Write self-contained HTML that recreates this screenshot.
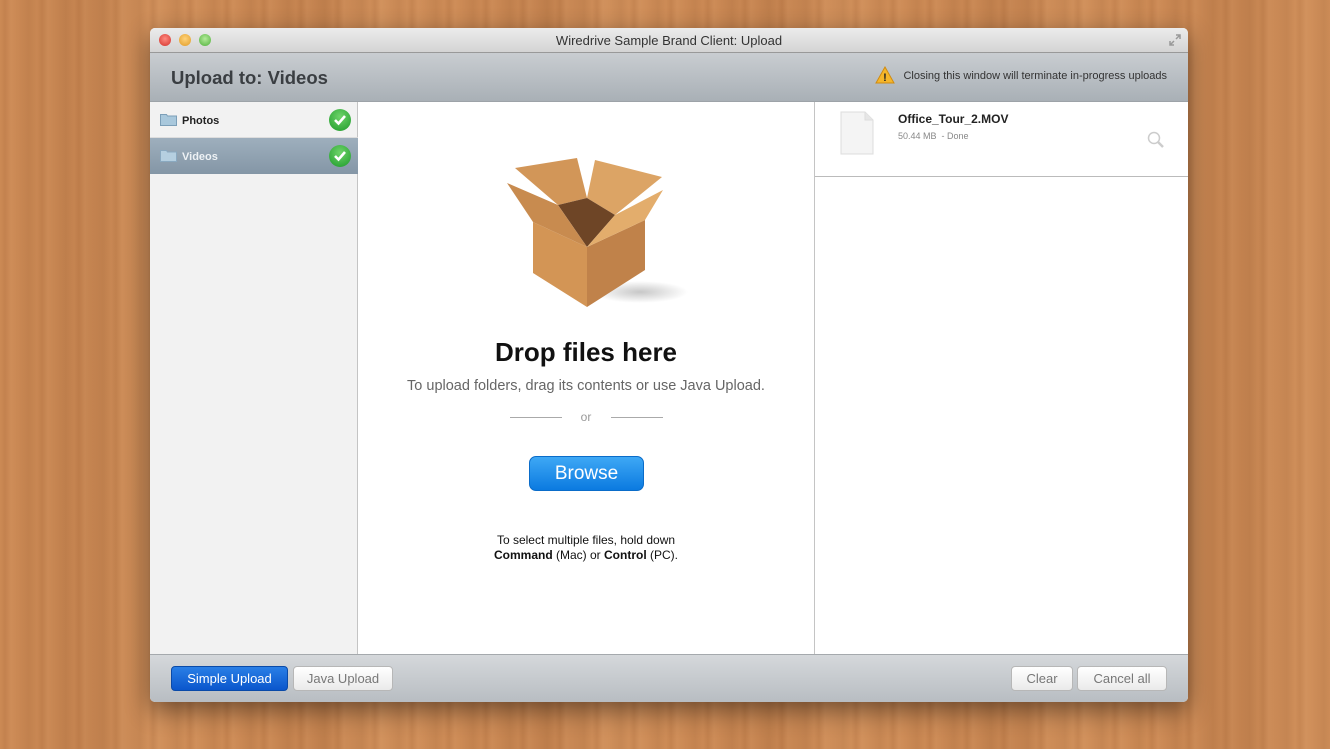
<!DOCTYPE html>
<html><head><meta charset="utf-8"><style>
*{margin:0;padding:0;box-sizing:border-box}
body{width:1330px;height:749px;overflow:hidden;position:relative;font-family:"Liberation Sans",sans-serif;
background:
repeating-linear-gradient(90deg,rgba(120,60,20,0) 0px,rgba(120,60,20,.10) 5px,rgba(255,200,150,.06) 11px,rgba(120,60,20,0) 17px,rgba(100,50,15,.08) 29px,rgba(120,60,20,0) 37px),
repeating-linear-gradient(90deg,rgba(90,40,10,0) 0,rgba(90,40,10,.07) 90px,rgba(255,210,160,.07) 150px,rgba(90,40,10,0) 230px),
#cc8a55;}
.win{position:absolute;left:150px;top:28px;width:1038px;height:674px;background:#fff;border-radius:5px;overflow:hidden;box-shadow:0 8px 25px rgba(0,0,0,.45);}
.title{position:absolute;left:0;top:0;width:100%;height:25px;background:linear-gradient(#ececec,#d4d4d4);border-bottom:1px solid #999;text-align:center;font-size:13px;color:#333;line-height:25px}
.dot{position:absolute;top:6px;width:12px;height:12px;border-radius:50%}
.hdr{position:absolute;left:0;top:25px;width:100%;height:49px;background:linear-gradient(#c9cdd1,#a9b0b6);border-bottom:1px solid #9da3a8}
.hdr h1{position:absolute;left:21px;top:14px;font-size:18.5px;font-weight:bold;color:#3a3e42}
.warn{position:absolute;right:21px;top:17px;font-size:11px;color:#333}
.side{position:absolute;left:0;top:74px;width:208px;height:552px;background:#f2f2f2;border-right:1px solid #c4c4c4}
.row{position:absolute;left:0;width:208px;height:36px;font-size:11px;font-weight:bold;line-height:38px;padding-left:32px}
.fold{position:absolute;left:10px;top:11px;width:17px;height:13px}
.chk{position:absolute;right:7px;top:7px;width:22px;height:22px;border-radius:50%;background:radial-gradient(circle at 50% 35%,#6fd46a,#1d9a2a);}
.chk svg{position:absolute;left:4px;top:5px}
.mid{position:absolute;left:208px;top:74px;width:456px;height:552px;text-align:center}
.right{position:absolute;left:664px;top:74px;width:374px;height:552px;border-left:1px solid #c4c4c4}
.foot{position:absolute;left:0;top:626px;width:100%;height:48px;background:linear-gradient(#d5d8db,#b8bdc2);border-top:1px solid #a5a9ad}
.btn{position:absolute;top:11px;height:25px;border-radius:4px;font-size:13px;line-height:23px;text-align:center;background:linear-gradient(#fff,#eaeaea);border:1px solid #b7b7b7;color:#777}
</style></head><body>
<div class="win">
 <div class="title">Wiredrive Sample Brand Client: Upload
  <div class="dot" style="left:9px;background:radial-gradient(circle at 50% 40%,#ff8a80,#d2302a)"></div>
  <div class="dot" style="left:29px;background:radial-gradient(circle at 50% 40%,#ffd37a,#e09a25)"></div>
  <div class="dot" style="left:49px;background:radial-gradient(circle at 50% 40%,#b4ec9a,#4eae3a)"></div>
  <svg style="position:absolute;right:6px;top:5px" width="14" height="14"><path d="M8 2h4v4M12 2L8 6M2 8v4h4M2 12l4-4" stroke="#999" stroke-width="1.5" fill="none"/></svg>
 </div>
 <div class="hdr"><h1>Upload to: Videos</h1>
  <div class="warn"><svg style="position:absolute;left:-28px;top:-4px" width="20" height="18"><path d="M10 1L19 17H1Z" fill="#f5b62b" stroke="#d08b10"/><text x="10" y="15" font-size="11" font-weight="bold" text-anchor="middle" fill="#222" font-family="Liberation Sans">!</text></svg>Closing this window will terminate in-progress uploads</div>
 </div>
 <div class="side">
  <div class="row" style="top:0;color:#222;border-bottom:1px solid #ddd"><svg class="fold" viewBox="0 0 17 13"><path d="M0.5 1.5h6l1 1.5h9v9.5h-16z" fill="#a9c8dc" stroke="#7c9fb8"/></svg>Photos<div class="chk"><svg width="14" height="12"><path d="M2 6l3.5 3.5L12 2" stroke="#fff" stroke-width="2.6" fill="none"/></svg></div></div>
  <div class="row" style="top:36px;color:#eef2f5;background:linear-gradient(#9eafbd,#8496a6)"><svg class="fold" viewBox="0 0 17 13"><path d="M0.5 1.5h6l1 1.5h9v9.5h-16z" fill="#b5cfe0" stroke="#8aa9c0"/></svg>Videos<div class="chk"><svg width="14" height="12"><path d="M2 6l3.5 3.5L12 2" stroke="#fff" stroke-width="2.6" fill="none"/></svg></div></div>
 </div>
 <div class="mid">
  <svg style="position:absolute;left:140px;top:52px" width="200" height="160" viewBox="498 154 200 160">
   <defs><radialGradient id="sh" cx="0.5" cy="0.5" r="0.5"><stop offset="0" stop-color="#000" stop-opacity=".22"/><stop offset="1" stop-color="#000" stop-opacity="0"/></radialGradient></defs>
   <ellipse cx="640" cy="292" rx="48" ry="11" fill="url(#sh)"/>
   <polygon points="515,168 577,158 587,198 558,205" fill="#d29658"/>
   <polygon points="595,160 662,177 615,215 587,198" fill="#dca465"/>
   <polygon points="558,205 587,198 615,215 587,247" fill="#6e4526"/>
   <polygon points="533,222 587,247 587,307 533,273" fill="#d39555"/>
   <polygon points="587,247 645,220 645,270 587,307" fill="#c0824a"/>
   <polygon points="507,183 558,205 587,247 533,222" fill="#c88b4f"/>
   <polygon points="587,247 615,215 663,190 645,220" fill="#e3ad6c"/>
  </svg>
  <div style="position:absolute;left:0;width:456px;top:235px;font-size:26px;font-weight:bold;color:#111">Drop files here</div>
  <div style="position:absolute;left:0;width:456px;top:276px;font-size:14.5px;color:#666">To upload folders, drag its contents or use Java Upload.</div>
  <div style="position:absolute;left:152px;top:315px;width:52px;border-top:1px solid #aaa"></div>
  <div style="position:absolute;left:0;width:456px;top:308px;font-size:12px;color:#999">or</div>
  <div style="position:absolute;left:253px;top:315px;width:52px;border-top:1px solid #aaa"></div>
  <div style="position:absolute;left:171px;top:354px;width:115px;height:35px;border-radius:7px;background:linear-gradient(#3ea8f5,#0b7ae0);border:1px solid #0a6cc9;color:#fff;font-size:19px;line-height:33px">Browse</div>
  <div style="position:absolute;left:0;width:456px;top:431px;font-size:12px;color:#111;line-height:15px">To select multiple files, hold down<br><b>Command</b> (Mac) or <b>Control</b> (PC).</div>
 </div>
 <div class="right">
  <div style="position:absolute;left:0;top:0;width:374px;height:75px;border-bottom:1px solid #bbb">
   <svg style="position:absolute;left:24px;top:9px" width="36" height="46"><path d="M2 1h24l8 8v34H2Z" fill="#f4f4f4" stroke="#ddd"/><path d="M26 1v8h8" fill="#e6e6e6" stroke="#ddd"/></svg>
   <div style="position:absolute;left:83px;top:10px;font-size:12px;font-weight:bold;color:#222">Office_Tour_2.MOV</div>
   <div style="position:absolute;left:83px;top:29px;font-size:9px;color:#888">50.44 MB &nbsp;- Done</div>
   <svg style="position:absolute;left:331px;top:28px" width="20" height="20"><circle cx="8" cy="8" r="5.5" stroke="#ccc" stroke-width="1.5" fill="none"/><path d="M12 12l5 5" stroke="#ccc" stroke-width="2.5"/></svg>
  </div>
 </div>
 <div class="foot">
  <div class="btn" style="left:21px;width:117px;background:linear-gradient(#2a7fe6,#0a56cc);border-color:#0a4aa8;color:#fff">Simple Upload</div>
  <div class="btn" style="left:143px;width:100px">Java Upload</div>
  <div class="btn" style="left:861px;width:62px">Clear</div>
  <div class="btn" style="left:927px;width:90px">Cancel all</div>
 </div>
</div>
</body></html>
